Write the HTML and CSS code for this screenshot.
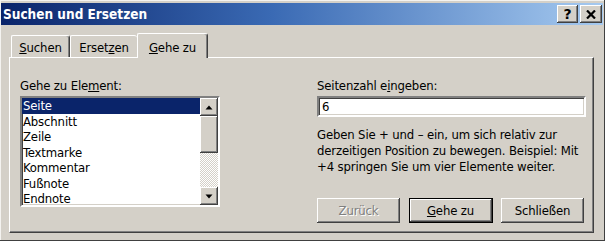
FILE: index.html
```html
<!DOCTYPE html>
<html lang="de">
<head>
<meta charset="utf-8">
<title>Suchen und Ersetzen</title>
<link rel="stylesheet" href="styles.css">
</head>
<body>
<div class="window">
  <div class="titlebar">
    <span class="title">Suchen und Ersetzen</span>
    <div class="caption-buttons">
      <span class="cbtn help">?</span>
      <span class="cbtn close">
        <svg width="10" height="9" viewBox="0 0 10 9"><path d="M1 0.5 L9 8.5 M9 0.5 L1 8.5" stroke="#000" stroke-width="2.2" fill="none"/></svg>
      </span>
    </div>
  </div>
  <div class="tabs">
    <div class="tab tab-suchen"><u>S</u>uchen</div>
    <div class="tab tab-ersetzen">Erset<u>z</u>en</div>
    <div class="tab tab-gehe active"><u>G</u>ehe zu</div>
  </div>
  <div class="panel">
    <div class="col-left">
      <div class="label">Gehe zu Ele<u>m</u>ent:</div>
      <div class="listbox">
        <ul class="items">
          <li class="selected">Seite</li>
          <li>Abschnitt</li>
          <li>Zeile</li>
          <li>Textmarke</li>
          <li>Kommentar</li>
          <li>Fußnote</li>
          <li>Endnote</li>
        </ul>
        <div class="scrollbar">
          <div class="sb-btn"><svg width="8" height="5" viewBox="0 0 8 5"><path d="M4 0.5 L7.5 4.5 L0.5 4.5 Z" fill="#000"/></svg></div>
          <div class="sb-thumb"></div>
          <div class="sb-track"></div>
          <div class="sb-btn"><svg width="8" height="5" viewBox="0 0 8 5"><path d="M0.5 0.5 L7.5 0.5 L4 4.5 Z" fill="#000"/></svg></div>
        </div>
      </div>
    </div>
    <div class="col-right">
      <div class="label">Seitenzahl e<u>i</u>ngeben:</div>
      <div class="input">6</div>
      <p class="hint">Geben Sie + und – ein, um sich relativ zur<br>derzeitigen Position zu bewegen. Beispiel: Mit<br>+4 springen Sie um vier Elemente weiter.</p>
      <div class="buttons">
        <div class="btn disabled">Zurück</div>
        <div class="btn default"><u>G</u>ehe zu</div>
        <div class="btn">Schließen</div>
      </div>
    </div>
  </div>
</div>
</body>
</html>
```
FILE: styles.css
```css
* { box-sizing: border-box; }
html, body { margin: 0; padding: 0; }
body {
  width: 605px;
  height: 241px;
  overflow: hidden;
  background: #d4d0c8;
  font-family: "DejaVu Sans Condensed", "DejaVu Sans", sans-serif;
  font-size: 13px;
  letter-spacing: -0.15px;
  color: #000;
}
.window {
  width: 605px;
  height: 241px;
  padding: 3px 2px 2px 1px;
  background: #d4d0c8;
  box-shadow: inset -1px -1px #404040, inset 1px 1px #f4f3f0;
  display: flex;
  flex-direction: column;
}
.titlebar {
  height: 22px;
  display: flex;
  align-items: center;
  justify-content: space-between;
  background: linear-gradient(to right, #0a246a 0%, #3a6ab4 45%, #a6caf0 100%);
  padding: 0 1px 0 2px;
}
.title {
  color: #fff;
  font-weight: bold;
  font-size: 13.5px;
  letter-spacing: 0;
  line-height: 16px;
}
.caption-buttons { display: flex; gap: 2px; }
.cbtn {
  width: 21px;
  height: 18px;
  background: #d4d0c8;
  box-shadow: inset -1px -1px #404040, inset 1px 1px #fff, inset -2px -2px #808080;
  display: flex;
  align-items: center;
  justify-content: center;
  font-family: "DejaVu Sans", sans-serif;
  font-weight: bold;
  font-size: 14px;
  line-height: 14px;
}
.cbtn.close { width: 22px; }

.tabs {
  display: flex;
  align-items: flex-end;
  height: 24px;
  margin-top: 8px;
  padding-left: 10px;
}
.tab {
  height: 22px;
  padding-top: 4px;
  line-height: 16px;
  text-align: center;
  border-top: 1px solid #fff;
  border-left: 1px solid #fff;
  border-right: 1px solid #404040;
  border-radius: 2px 3px 0 0;
  box-shadow: inset -1px 0 #808080;
}
.tab-suchen { width: 59px; }
.tab-ersetzen { width: 67px; border-right: none; box-shadow: none; }
.tab.active {
  position: relative;
  z-index: 1;
  width: 71px;
  height: 25px;
  margin-bottom: -1px;
  padding-top: 6px;
  background: #d4d0c8;
}

.panel {
  margin-left: 8px;
  width: 585px;
  height: 176px;
  border-top: 1px solid #fff;
  border-left: 1px solid #fff;
  border-right: 1px solid #404040;
  border-bottom: 1px solid #404040;
  box-shadow: inset -1px -1px #808080;
  display: flex;
  padding: 20px 0 9px 10px;
}
.label {
  line-height: 16px;
  margin-bottom: 2px;
  white-space: nowrap;
}
.col-left { width: 200px; display: flex; flex-direction: column; }
.listbox {
  height: 111px;
  background: #fff;
  display: flex;
  border: 2px solid;
  border-color: #808080 #fff #fff #808080;
  box-shadow: inset 1px 1px #404040, inset -1px -1px #d4d0c8;
}
.items {
  list-style: none;
  margin: 0;
  padding: 0;
  flex: 1;
}
.items li {
  height: 15.5px;
  line-height: 15.5px;
  padding-left: 1px;
  white-space: nowrap;
}
.items li.selected { background: #0a246a; color: #fff; }
.scrollbar {
  width: 18px;
  display: flex;
  flex-direction: column;
}
.sb-btn, .sb-thumb {
  background: #d4d0c8;
  box-shadow: inset -1px -1px #404040, inset 1px 1px #fff, inset -2px -2px #808080;
}
.sb-btn {
  height: 18px;
  display: flex;
  align-items: center;
  justify-content: center;
}
.sb-thumb { height: 37px; }
.sb-track {
  flex: 1;
  background-color: #d4d0c8;
  background-image: conic-gradient(#fff 25%, transparent 0 50%, #fff 0 75%, transparent 0);
  background-size: 2px 2px;
}

.col-right {
  margin-left: 97px;
  width: 269px;
  display: flex;
  flex-direction: column;
}
.input {
  height: 21px;
  background: #fff;
  border: 2px solid;
  border-color: #808080 #fff #fff #808080;
  box-shadow: inset 1px 1px #404040, inset -1px -1px #d4d0c8;
  padding-left: 3px;
  line-height: 17px;
}
.hint {
  margin: 10px 0 0 0;
  line-height: 16px;
  white-space: nowrap;
}
.buttons {
  margin-top: auto;
  display: flex;
  justify-content: space-between;
  padding-right: 2px;
}
.btn {
  width: 83px;
  height: 25px;
  line-height: 25px;
  text-align: center;
  background: #d4d0c8;
  box-shadow: inset -1px -1px #404040, inset 1px 1px #fff, inset -2px -2px #808080;
}
.btn.default {
  width: 84px;
  line-height: 23px;
  border: 1px solid #000;
}
.btn.disabled {
  color: #808080;
  text-shadow: 1px 1px #fff;
}
```
